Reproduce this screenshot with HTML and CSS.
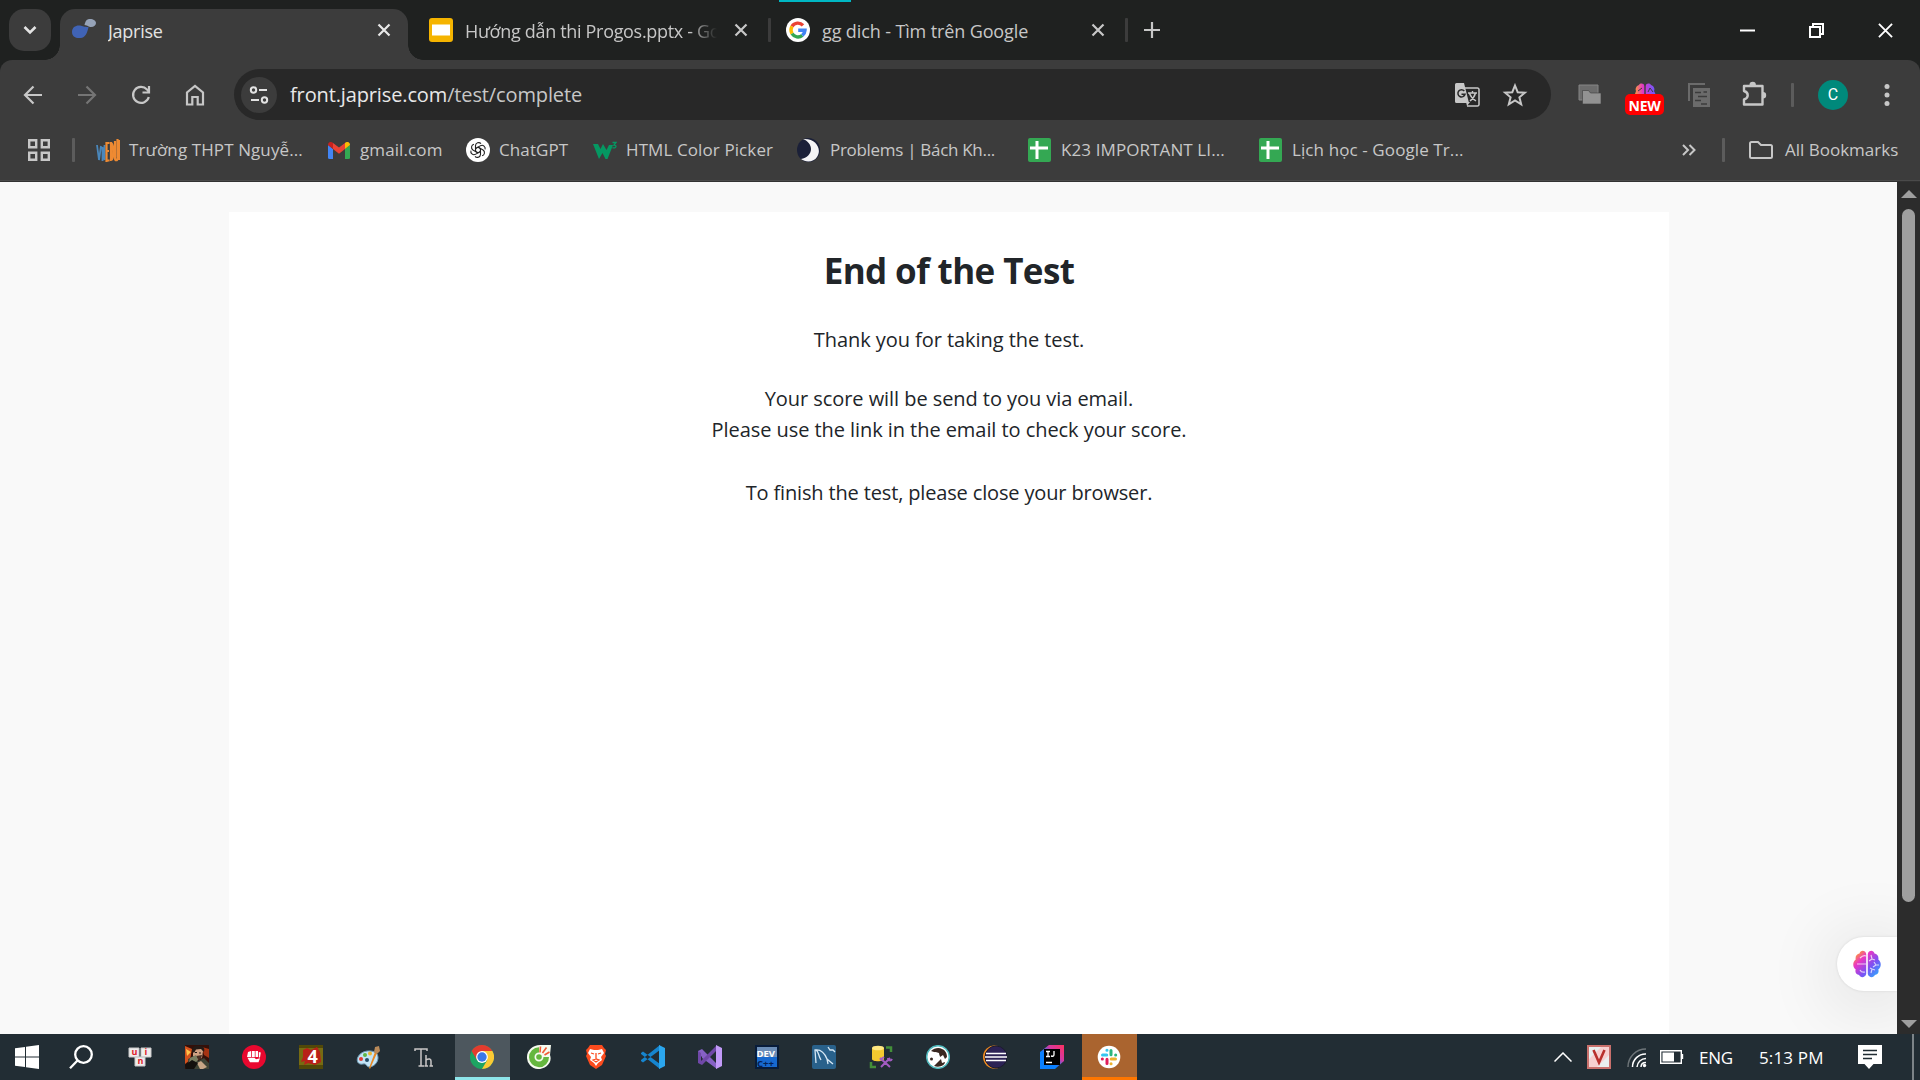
FILE: index.html
```html
<!DOCTYPE html>
<html lang="en">
<head>
<meta charset="utf-8">
<title>Japrise</title>
<link rel="stylesheet" href="styles.css">
</head>
<body>
<div class="screen">
  <header class="tabstrip">
    <button class="tab-search"><svg width="14" height="10" viewBox="0 0 14 10" fill="none" stroke="#e3e3e3" stroke-width="2.6"><path d="M1.5 2l5.5 5.5L12.500 2"/></svg></button>
    <div class="tab tab-active">
      <svg class="favicon" width="24" height="24" viewBox="0 0 24 24"><path d="M0 14c0-5 4-7 8-6.500 3 .5 4 1.500 8.500 1.500-1 5-3 11-8 11C3 20.500 0 18 0 14z" fill="#4063b5"/><path d="M12.500 7c1-4 2-6 5.500-6s6 2 6 4-2 4-5 4c-2.500 0-3-1.500-6.500-2z" fill="#96a3b8"/></svg>
      <span class="tab-title title-1">Japrise</span>
      <svg class="close" width="14" height="14" viewBox="0 0 14 14" stroke="#e8e8e8" stroke-width="2.2"><path d="M1.500 1.500l11 11M12.500 1.500l-11 11"/></svg>
    </div>
    <div class="tab tab-slides">
      <svg class="favicon" width="24" height="24" viewBox="0 0 24 24"><rect width="24" height="24" rx="3" fill="#f5b400"/><rect x="3" y="6.500" width="18" height="11" fill="#fff"/></svg>
      <span class="tab-title title-2">Hướng dẫn thi Progos.pptx - Google Slides</span>
      <svg class="close" width="14" height="14" viewBox="0 0 14 14" stroke="#c7c7c7" stroke-width="2.200"><path d="M1.500 1.500l11 11M12.500 1.500l-11 11"/></svg>
    </div>
    <i class="tab-sep"></i>
    <div class="tab tab-google">
      <svg class="favicon" width="24" height="24" viewBox="0 0 24 24" fill="none" stroke-width="3.400"><circle cx="12" cy="12" r="12" fill="#fff" stroke="none"/><path d="M17 7.300A7 7 0 0 0 6 8.300" stroke="#ea4335"/><path d="M6 8.300a7.500 7.500 0 0 0 0 7.400" stroke="#fbbc05"/><path d="M6 15.700a7 7 0 0 0 10.300 1.700" stroke="#34a853"/><path d="M16.300 17.400A7 7 0 0 0 19 12.300h-6.800" stroke="#4285f4"/></svg>
      <span class="tab-title title-3">gg dich - Tìm trên Google</span>
      <svg class="close" width="14" height="14" viewBox="0 0 14 14" stroke="#c7c7c7" stroke-width="2.200"><path d="M1.500 1.500l11 11M12.500 1.500l-11 11"/></svg>
    </div>
    <i class="tab-sep"></i>
    <svg class="new-tab" width="16" height="16" viewBox="0 0 16 16" stroke="#c7c7c7" stroke-width="2.200"><path d="M8 0v16M0 8h16"/></svg>
    <div class="window-controls">
      <button><svg width="15" height="15" viewBox="0 0 15 15"><path d="M0 6.500h15v2H0z" fill="#fff"/></svg></button>
      <button><svg width="15" height="15" viewBox="0 0 15 15" fill="none" stroke="#fff" stroke-width="2"><path d="M1 4h10v10H1zM4 4V1h10v10h-3"/></svg></button>
      <button><svg width="15" height="15" viewBox="0 0 16 16" stroke="#fff" stroke-width="2"><path d="M1 1l14 14M15 1L1 15"/></svg></button>
    </div>
  </header>

  <div class="chrome">
    <nav class="toolbar">
      <div class="nav-icons">
        <svg width="20" height="20" viewBox="0 0 20 20" fill="none" stroke="#c7c7c7" stroke-width="2.200"><path d="M19 10H2.500M10.500 1.500L2 10l8.500 8.500"/></svg>
        <svg width="20" height="20" viewBox="0 0 20 20" fill="none" stroke="#757575" stroke-width="2.200"><path d="M1 10h16.500M9.500 1.500L18 10l-8.500 8.500"/></svg>
        <svg width="20" height="20" viewBox="0 0 20 20" fill="none" stroke="#c7c7c7" stroke-width="2.200"><path d="M17.800 12a8 8 0 1 1-1.800-7.500l2 2M18 1v6.500h-6.500"/></svg>
        <svg width="20" height="22" viewBox="0 0 20 22" fill="none" stroke="#c7c7c7" stroke-width="2.200"><path d="M2 20.500V8.500l8-6.500 8 6.500v12h-5.300v-7.500H7.300v7.500z"/></svg>
      </div>
      <div class="omnibox">
        <span class="site-info"><svg width="20" height="18" viewBox="0 0 20 18" fill="none" stroke="#e3e3e3" stroke-width="2"><circle cx="4.500" cy="4" r="2.700"/><path d="M10 4h8M2 14h8"/><circle cx="15.500" cy="14" r="2.700"/></svg></span>
        <span class="url">front.japrise.com<span class="path">/test/complete</span></span>
        <svg class="translate" width="26" height="26" viewBox="0 0 26 26"><path d="M11 6h12.500a1.500 1.500 0 0 1 1.500 1.500v15a1.500 1.500 0 0 1-1.500 1.500H13" fill="none" stroke="#c7c7c7" stroke-width="1.500"/><path d="M2.500 1H10l5 20H2.500A1.500 1.500 0 0 1 1 19.500v-17A1.500 1.500 0 0 1 2.500 1zM12 20h4l-3 4z" fill="#c7c7c7"/><path d="M10.300 9A3.600 3.600 0 1 0 11 12.300H7.500" fill="none" stroke="#282828" stroke-width="1.500"/><path d="M14 11h9M18.500 9v2M21.500 11c-1 4-3 6-5.500 8M15.500 11.500c1.500 4 4 6 6.500 7.500" fill="none" stroke="#c7c7c7" stroke-width="1.400"/></svg>
        <svg class="star" width="26" height="24" viewBox="0 0 26 24" fill="none" stroke="#c7c7c7" stroke-width="2"><path d="M13 2.500l2.700 6.700 7.200.5-5.500 4.600 1.800 7-6.200-3.900-6.200 3.900 1.800-7-5.500-4.600 7.200-.5z"/></svg>
      </div>
      <div class="extensions">
        <svg class="ext-tabs" width="24" height="22" viewBox="0 0 24 22"><path d="M1 1h19v15H1z" fill="#6c6c6c" stroke="#858585"/><path d="M4.500 6.500h6l2 2.500h10.500v11H4.500z" fill="#929292" stroke="#3c3c3c" stroke-width=".6"/></svg>
        <span class="ext-brain">
          <svg width="22" height="11" viewBox="0 0 22 11"><defs><linearGradient id="halfBrain"><stop stop-color="#ff963c"/><stop offset=".4" stop-color="#df36cc"/><stop offset="1" stop-color="#645cff"/></linearGradient></defs><path d="M10.300 11V3C10 0 6 0 5 2 2 3 1 6 2 8l-1 3zM11.700 11V3c.5-3 4-3 5.300-1 3 1 4 4 3 6l1.500 3z" fill="url(#halfBrain)"/><path d="M4 8l4-3M14 9l2-4 3 4" stroke="#3c3c3c" fill="none"/></svg>
          <b class="new-badge">NEW</b>
        </span>
        <svg class="ext-news" width="24" height="26" viewBox="0 0 24 26"><path d="M2 19V2h16" fill="none" stroke="#6b6b6b" stroke-width="2"/><path d="M6 6h17v19H6z" fill="#6b6b6b"/><path d="M8 10.500h6M11 14.500h9M8 18.500h6M14 22h6M16.500 10H20" stroke="#3c3c3c" stroke-width="1.500"/></svg>
        <svg class="ext-puzzle" width="26" height="26" viewBox="0 0 26 26"><path d="M3 5h18.500v18.500H3v-5c5-1.500 5-7 0-8.500z" fill="none" stroke="#c7c7c7" stroke-width="2.400" stroke-linejoin="round"/><path d="M8.500 4a3.200 3.200 0 0 1 6.400 0zM22 11a3.200 3.200 0 0 1 0 6.400z" fill="#c7c7c7"/></svg>
        <i class="tool-sep"></i>
        <span class="avatar">C</span>
        <svg class="menu" width="6" height="24" viewBox="0 0 6 24" fill="#c7c7c7"><circle cx="3" cy="3.500" r="2.500"/><circle cx="3" cy="12" r="2.500"/><circle cx="3" cy="20.500" r="2.500"/></svg>
      </div>
    </nav>

    <nav class="bookmarks">
      <svg class="apps" width="22" height="22" viewBox="0 0 22 22" fill="none" stroke="#c7c7c7" stroke-width="2.400"><path d="M1.200 1.200h7v7h-7zM13.800 1.200h7v7h-7zM1.200 13.800h7v7h-7zM13.800 13.800h7v7h-7z"/></svg>
      <i class="bm-sep"></i>
      <a class="bm bm-school"><svg width="24" height="24" viewBox="0 0 24 24" fill="none"><path d="M1 7l2 15 2-14M6.500 23V9l2 13V7" stroke="#4a87bb" stroke-width="1.800"/><path d="M10.500 4v20M10 5h3.500M10 13h3M10 22.500h3.500M15 4v18c3 0 3-17 0-17M19 3v17c0 3 2.500 3 2.500 0V1M23.300 2v20" stroke="#ee8a32" stroke-width="2.200"/></svg><span>Trường THPT Nguyễ...</span></a>
      <a class="bm bm-gmail"><svg width="22" height="17" viewBox="0 0 22 17"><path d="M0 3l5 4v10H1.500A1.500 1.500 0 0 1 0 15.500z" fill="#4285f4"/><path d="M22 3l-5 4v10h3.500a1.500 1.500 0 0 0 1.500-1.500z" fill="#34a853"/><path d="M0 3c0-3 3-4 5-2v6L0 3z" fill="#c5221f"/><path d="M22 3c0-3-3-4-5-2v6l5-4z" fill="#fbbc04"/><path d="M5 1l6 4.500L17 1v6l-6 4.700L5 7z" fill="#ea4335"/></svg><span>gmail.com</span></a>
      <a class="bm bm-gpt"><svg width="24" height="24" viewBox="0 0 24 24" fill="none" stroke="#222" stroke-width="1.100"><circle cx="12" cy="12" r="12" fill="#fff" stroke="none"/><g id="petals"><path d="M12 9.200l2.500 1.400v5.800a3.200 3.200 0 0 1-5.500 2"/><path d="M12 9.200l2.500 1.400v5.800a3.200 3.200 0 0 1-5.500 2" transform="rotate(60 12 12)"/><path d="M12 9.200l2.500 1.400v5.800a3.200 3.200 0 0 1-5.500 2" transform="rotate(120 12 12)"/></g><use href="#petals" transform="rotate(180 12 12)"/></svg><span>ChatGPT</span></a>
      <a class="bm bm-w3"><svg width="24" height="18" viewBox="0 0 24 18"><path d="M0 3h5l2.500 5L10 3l3.500 6L16 4h4l-5.500 14h-2L9.500 12 6 18z" fill="#059862"/><path d="M19.500 1.500H23l-2 2.500c3 0 2.500 4-1.500 2.700" fill="none" stroke="#059862" stroke-width="1.300"/></svg><span>HTML Color Picker</span></a>
      <a class="bm bm-problems"><svg width="23" height="24" viewBox="0 0 23 24"><ellipse cx="11.500" cy="12" rx="11.500" ry="12" fill="#1b2038"/><path d="M6 1c14-1 19 11 14 18-3 5-11 6-16 2 6-1 10-5 10-10 0-4-3-8-8-10z" fill="#f4f4f6"/></svg><span>Problems | Bách Kh...</span></a>
      <a class="bm bm-k23"><svg width="23" height="24" viewBox="0 0 23 24"><rect width="23" height="24" rx="2" fill="#34a853"/><path d="M2 10h18M9 3v18" stroke="#fff" stroke-width="3"/></svg><span>K23 IMPORTANT LI...</span></a>
      <a class="bm bm-schedule"><svg width="23" height="24" viewBox="0 0 23 24"><rect width="23" height="24" rx="2" fill="#34a853"/><path d="M2 10h18M9 3v18" stroke="#fff" stroke-width="3"/></svg><span>Lịch học - Google Tr...</span></a>
      <svg class="more" width="14" height="12" viewBox="0 0 14 12" fill="none" stroke="#c7c7c7" stroke-width="2"><path d="M1 1l5 5-5 5M7.500 1l5 5-5 5"/></svg>
      <i class="bm-sep"></i>
      <a class="bm bm-all"><svg width="24" height="18" viewBox="0 0 24 18" fill="none" stroke="#c7c7c7" stroke-width="2"><path d="M2.500 1H9l3 3h9.500A1.500 1.500 0 0 1 23 5.500v10a1.500 1.500 0 0 1-1.500 1.500h-19A1.500 1.500 0 0 1 1 15.500v-13A1.500 1.500 0 0 1 2.500 1z"/></svg><span>All Bookmarks</span></a>
    </nav>
  </div>

  <div class="viewport">
    <main class="page">
      <section class="card">
        <h1>End of the Test</h1>
        <p>Thank you for taking the test.</p>
        <p>Your score will be send to you via email.<br>Please use the link in the email to check your score.</p>
        <p class="last">To finish the test, please close your browser.</p>
      </section>
      <div class="assistant"><svg width="28" height="28" viewBox="0 0 28 28"><defs><linearGradient id="brain" x1="0" y1="0" x2="1" y2="1"><stop offset=".1" stop-color="#ff9a35"/><stop offset=".32" stop-color="#e936c5"/><stop offset=".62" stop-color="#7a52f4"/><stop offset="1" stop-color="#1cc0ff"/></linearGradient></defs><path d="M13.200 4v20c-1 4-6 4-7 1-3 0-4.500-3-3.500-5.500-3.500-2.500-3-8 0-10C2 6 4 4 6.500 3.500c1-4 6-3.500 6.700.5zM14.800 4v20c1 4 6 4 7 1 3 0 4.500-3 3.500-5.500 3.500-2.500 3-8 0-10C26 6 24 4 21.500 3.500c-1-4-6-3.500-6.700.5z" fill="url(#brain)"/><path d="M13 6c-2-1-4 0-6 2M4 14h9M7 20c1 2 3 2.500 5 2M18 5l1 4-3 2M19 9l3 1M21 12l2 3h3M23 15l-3 2M18 23l1-4-2-1M19 19l3 1" fill="none" stroke="#ffffffb8" stroke-width="1.200"/></svg></div>
    </main>
    <aside class="scrollbar">
      <svg width="16" height="8" viewBox="0 0 16 8"><path d="M0 8l8-8 8 8z" fill="#9f9f9f"/></svg>
      <i class="thumb"></i>
      <svg width="16" height="8" viewBox="0 0 16 8"><path d="M0 0l8 8 8-8z" fill="#9f9f9f"/></svg>
    </aside>
  </div>

  <footer class="taskbar">
    <span class="start"><svg width="24" height="24" viewBox="0 0 24 24" fill="#fff"><path d="M0 3.300l10-1.400v9.600H0zM11 1.700L24 0v11.500H11zM0 12.500h10v9.600L0 20.700zM11 12.500h13V24l-13-1.700z"/></svg></span>
    <span class="search"><svg width="24" height="24" viewBox="0 0 24 24" fill="none" stroke="#fff" stroke-width="2.300"><circle cx="14.500" cy="9.500" r="8.300"/><path d="M8.500 15.500L1 23.200"/></svg></span>
    <div class="apps-row">
      <span><svg width="24" height="24" viewBox="0 0 24 24" class="keys"><path d="M1 3h10v9H1zM13 3h10v9H13zM7 12h10v9H7z" fill="#efeded" stroke="#c9c9c9"/><text x="3.500" y="9.500">u</text><text x="16.500" y="10">i</text><text x="9.500" y="18.500">n</text></svg></span>
      <span><svg width="24" height="24" viewBox="0 0 24 24"><path d="M0 0h24v24H0z" fill="#341009"/><path d="M0 1l7 3-2 11-5 4z" fill="#d4521d"/><path d="M1 4l5 3-4 4z" fill="#ffc34a"/><path d="M17 2l7 2v9l-5-3z" fill="#a63312"/><path d="M8 5c2-4 9-3 10 1l-1 7-5 2-4-4z" fill="#d0a081"/><path d="M7 6c0-5 4-6 8-5 4 0 5 3 4 6l-3-3-5 .5L9 8z" fill="#241a16"/><path d="M10 7.500h2M14 8h2" stroke="#241a16"/><path d="M11 11l6-1-1 4-3 1z" fill="#4a2f23"/><path d="M3 14l6-3 4 5 6-3 5 5v6H4z" fill="#3f4436"/><path d="M5 13l6-3 2 5-4 4-5-2z" fill="#7b7f62"/><path d="M12 18l4-2 6 6-4 2h-3z" fill="#c7a686"/><path d="M0 20l7-5 6 3-4 6H1z" fill="#14110e"/></svg></span>
      <span><svg width="24" height="24" viewBox="0 0 24 24"><circle cx="12" cy="12" r="12" fill="#e9082f"/><path d="M6 7l3-1v6l-4 0zM9.800 6h3v6h-3zM13.500 6h2.500v6h-2.500zM16.800 7l2 .5-.8 5h-1.200zM5.500 12.800h7l1.500 1.500 4-1-1.500 4H8z" fill="#fff"/></svg></span>
      <span><svg width="24" height="24" viewBox="0 0 24 24" class="four"><path d="M0 0h24v24H0z" fill="#776b12"/><path d="M0 0h24v3H0zM0 20h24v4H0z" fill="#514808"/><path d="M4 5l4-2 4 2 6-3 3 5 1 10-6 3-7-2-4 2 1-4-4 1 2-5z" fill="#b82018"/><text x="8.500" y="18">4</text></svg></span>
      <span><svg width="25" height="24" viewBox="0 0 25 24"><path d="M2 12C5 5 17 4 21 9c3 5-1 12-7 13-4 .5-3-4-7-3-5 1-7-3-5-7z" fill="#c3e4f6" stroke="#729eb9"/><circle cx="5" cy="14" r="2" fill="#e33b32"/><circle cx="9" cy="10" r="2" fill="#5eb544"/><circle cx="14" cy="8.500" r="2" fill="#edb431"/><circle cx="11" cy="15" r="2" fill="#244c66"/><path d="M13 23L19 7l2 1-7 16z" fill="#e88924"/><path d="M18 7l1-5 4-1 1 5-3 3z" fill="#b88959"/></svg></span>
      <span><svg width="24" height="24" viewBox="0 0 24 24" fill="none" stroke="#c9c6c6" stroke-width="1.500"><path d="M2 6V4h12v2M8 4v16.500M5.500 21H11M13 10v11M13 15c3-2 5-1 5 1v5M11.500 21H15M16.500 21H20"/></svg></span>
      <span class="running"><svg width="24" height="24" viewBox="0 0 24 24"><circle cx="12" cy="12" r="12" fill="#1da462"/><path d="M1.600 6A12 12 0 0 1 22.400 6H12z" fill="#e33b2e"/><path d="M1.600 6l5.300 9L12 12V6z" fill="#e33b2e"/><path d="M22.400 6A12 12 0 0 1 12 24l5.300-9L12 6z" fill="#fcc934"/><circle cx="12" cy="12" r="5.900" fill="#fff"/><circle cx="12" cy="12" r="4.700" fill="#3b78e7"/></svg></span>
      <span><svg width="24" height="24" viewBox="0 0 24 24"><path d="M13 0h11l-1 10c3 8-5 14-12 14A11.500 11.500 0 0 1 0 12C0 5 6 0 13 0z" fill="#f6fbef"/><path d="M12 2.200A10 10 0 1 0 22 12h-5.500a4.500 4.500 0 1 1-4.500-4.500z" fill="#65b73e"/><circle cx="12" cy="12" r="2.800" fill="#65b73e"/><path d="M13 7.500l.5-6M15.500 8l4-5.500M17.500 10l5-3" stroke="#f15b35" stroke-width="1.600"/></svg></span>
      <span><svg width="24" height="24" viewBox="0 0 24 24"><path d="M6 0h12l2 3 2 2-1 4 1 2-4 9-6 4-6-4-4-9 1-2-1-4 2-2z" fill="#fb4b1e"/><path d="M6 4l4 1h4l4-1 2 4-3 4 1 3-4 3-2 3-2-3-4-3 1-3-3-4z" fill="#fff"/><path d="M7 8l3 1M17 8l-3 1M12 8v6M9 15l3-1 3 1-3 2z" fill="none" stroke="#fb4b1e" stroke-width="1.300"/></svg></span>
      <span><svg width="24" height="24" viewBox="0 0 24 24"><path d="M0 8l2-1.500L19 19v5L0 9zM0 16l2 1.500L19 5V0L0 15z" fill="#1685cf"/><path d="M18 0l6 3v18l-6 3z" fill="#2ba6ee"/></svg></span>
      <span><svg width="24" height="24" viewBox="0 0 24 24"><path d="M0 6l4-2 15 15v5L4 13v-2L0 15z" fill="#8661c5"/><path d="M0 18V6l3 2v8L19 0v5L4 20z" fill="#7048a8"/><path d="M18 0l6 3v18l-6 3z" fill="#c29af8"/></svg></span>
      <span><svg width="24" height="24" viewBox="0 0 24 24" class="dev"><path d="M1 1h22v22H1z" fill="#1769cf" stroke="#081c3a" stroke-width="2"/><path d="M2 2h20v10H2z" fill="#6b8db7"/><text x="1.500" y="11.500" fill="#fff">DEV</text><text x="2" y="21.500" fill="#052053">C++</text></svg></span>
      <span><svg width="24" height="24" viewBox="0 0 24 24"><rect width="24" height="24" rx="2" fill="#29618b"/><path d="M4 18L3 5c6-1 10 4 12 9l6 5M4 5c3 2 2 5 5 10M15 14l1 5M16 2l2 3h3l2 2" fill="none" stroke="#d7e8f5" stroke-width="1.300"/></svg></span>
      <span><svg width="24" height="24" viewBox="0 0 24 24"><path d="M3 3v11c0 3 12 3 12 0V3z" fill="#f4c92f"/><ellipse cx="9" cy="3" rx="6" ry="2.300" fill="#ffe781"/><path d="M17 2.500h5V7M2 17v5h5" fill="none" stroke="#438f39" stroke-width="2.500"/><path d="M11 13l10 9M21 13l-9 9M11 15l4-3M19 13c0 3 3 3 4 1" fill="none" stroke="#a35bc2" stroke-width="2"/></svg></span>
      <span><svg width="24" height="24" viewBox="0 0 24 24"><circle cx="12" cy="12" r="11.300" fill="#fff" stroke="#4fb9bd" stroke-width="1.500"/><path d="M5 6c3-3 8-4 11-2 3 1 5 4 5 8l-2 2-2-4-3 2-2-4-4-1z" fill="#382720"/><path d="M9 7l4 1 1 5-3 3-6 1-1-3 2-4z" fill="#fff"/><path d="M8 21l3-3 4-4 1 4 3-1c0 3-5 6-11 4z" fill="#382720"/><circle cx="5.500" cy="14" r="1.500" fill="#382720"/></svg></span>
      <span><svg width="24" height="24" viewBox="0 0 24 24"><circle cx="11.500" cy="12" r="11.500" fill="#f18b20"/><circle cx="13" cy="12" r="11" fill="#2c2255" stroke="#1b1a2f"/><path d="M3 8.500h20M2 12h22M3 15.500h20" stroke="#fff" stroke-width="1.700"/></svg></span>
      <span><svg width="24" height="24" viewBox="0 0 24 24"><defs><linearGradient id="idea" x1="1" y1="0" x2="0" y2="1"><stop stop-color="#ff315e"/><stop offset=".35" stop-color="#d438a2"/><stop offset=".6" stop-color="#0a80ff"/></linearGradient></defs><path d="M9 0h15v16l-9 8H0V7z" fill="url(#idea)"/><path d="M4 4h16v16H4z"/><path d="M6 6.500h4M8 6.500v5M6 11.500h4M14 6v3.500c0 2-1 2-3 1.500M6 17.500h6" fill="none" stroke="#fff" stroke-width="1.300"/></svg></span>
      <span class="alert"><svg width="24" height="24" viewBox="0 0 24 24" stroke-width="3" stroke-linecap="round"><circle cx="12" cy="12" r="11.300" fill="#fff"/><path d="M5.500 10h4.300M10 5.300h-.1" stroke="#36c5f0"/><path d="M14 5.500v4.300M18.700 10h-.1" stroke="#2eb67d"/><path d="M14.200 14h4.300M14 18.700h.1" stroke="#ecb22e"/><path d="M10 14.200v4.300M5.300 14h.1" stroke="#e01e5a"/></svg></span>
    </div>
    <div class="tray">
      <svg class="chevron" width="18" height="10" viewBox="0 0 18 10" fill="none" stroke="#fff" stroke-width="1.500"><path d="M.5 9.500L9 1l8.500 8.500"/></svg>
      <svg class="vkey" width="24" height="24" viewBox="0 0 24 24"><path d="M1 1h22v22H1z" fill="#f7d0d0" stroke="#c9706c" stroke-width="2"/><path d="M2 2h12L2 14zM22 10v12H10z" fill="#e9eeee"/><path d="M6.500 5l5.500 12.500L17.500 5" fill="none" stroke="#b8302c" stroke-width="2.600"/></svg>
      <svg class="wifi" width="20" height="20" viewBox="0 0 20 20" fill="none" stroke-width="1.500"><path d="M1 19A18 18 0 0 1 19 1" stroke="#6d7478"/><path d="M5.500 19A13 13 0 0 1 19 6M10 19a9 9 0 0 1 9-8.500M14 19c0-3 2-4.500 5-4.500" stroke="#fff"/><circle cx="17.500" cy="17.500" r="1.700" fill="#fff"/></svg>
      <svg class="battery" width="24" height="14" viewBox="0 0 24 14"><path d="M.7.700h20.600v12.600H.700zM22.500 4v5" fill="none" stroke="#fff" stroke-width="1.400"/><path d="M2.500 2.500H14v9H2.500z" fill="#fff"/></svg>
      <span class="lang">ENG</span>
      <span class="clock">5:13 PM</span>
      <svg class="notice" width="24" height="24" viewBox="0 0 24 24"><path d="M0 0h24v19H15.500L11 24l-4.500-5H0z" fill="#fff"/><path d="M5 5.500h14M5 9.500h14M5 13.500h9" stroke="#202c33" stroke-width="1.300"/></svg>
      <i class="show-desktop"></i>
    </div>
  </footer>
</div>
</body>
</html>
```
FILE: styles.css
```css
* { box-sizing: border-box; }
body { margin: 0; background: #1f2120; font-family: "Open Sans", "Noto Sans", sans-serif; overflow: hidden; }
svg { display: block; flex: none; }
button { border: 0; padding: 0; background: none; display: flex; align-items: center; justify-content: center; }
.screen { width: 1920px; height: 1080px; display: flex; flex-direction: column; }

/* Tab strip */
.tabstrip { height: 60px; display: flex; align-items: center; padding-left: 9px; flex: none; color: #c7c7c7; }
.tab-search { width: 42px; height: 42px; border-radius: 15px; background: #3c3c3c; margin-right: 9px; }
.tab { display: flex; align-items: center; height: 60px; position: relative; }
.tab-title { font-size: 18px; line-height: 24px; margin-top: 2px; white-space: nowrap; overflow: hidden; }
.tab .close { margin-left: auto; }
.tab-active { width: 348px; height: 51px; align-self: flex-end; background: #3c3c3c; border-radius: 15px 15px 0 0; padding: 0 17px 9px 12px; color: #e3e3e3; }
.tab-active::before, .tab-active::after { content: ""; position: absolute; bottom: 0; width: 15px; height: 15px; }
.tab-active::before { left: -15px; background: radial-gradient(circle at 0 0, transparent 14.500px, #3c3c3c 15px); }
.tab-active::after { right: -15px; background: radial-gradient(circle at 100% 0, transparent 14.500px, #3c3c3c 15px); }
.title-1 { margin-left: 12px; letter-spacing: -.25px; }
.tab-slides { width: 360px; padding: 0 20px 0 21px; }
.title-2 { width: 252px; margin-left: 12px; letter-spacing: -.32px; -webkit-mask-image: linear-gradient(90deg, #000 225px, transparent 252px); mask-image: linear-gradient(90deg, #000 225px, transparent 252px); }
.tab-google { width: 354px; padding: 0 20px 0 15px; }
.tab-google::before { content: ""; position: absolute; left: 8px; top: 0; width: 72px; height: 2px; background: #00b7c3; }
.title-3 { margin-left: 12px; letter-spacing: -.12px; }
.tab-sep { width: 3px; height: 24px; border-radius: 1px; background: #3c3c3c; }
.new-tab { margin-left: 16px; }
.window-controls { margin-left: auto; display: flex; }
.window-controls button { width: 69px; height: 60px; }

/* Toolbar */
.chrome { height: 122px; flex: none; background: #3c3c3c; border-radius: 12px 12px 0 0; border-bottom: 1px solid #323232; box-shadow: inset 0 -1px #4a4a4a; }
.toolbar { height: 69px; display: flex; align-items: center; }
.nav-icons { display: flex; gap: 34px; padding-left: 23px; width: 234px; align-items: center; }
.omnibox { width: 1317px; height: 51px; border-radius: 26px; background: #282828; display: flex; align-items: center; padding: 0 23px 0 7px; }
.site-info { width: 36px; height: 36px; border-radius: 50%; background: #3c3c3c; display: flex; align-items: center; justify-content: center; }
.url { margin-left: 13px; font-size: 20px; letter-spacing: -.13px; color: #e8e8e8; }
.path { color: #c7c7c7; }
.translate { margin-left: auto; margin-right: 22px; }
.extensions { display: flex; align-items: center; flex: 1; padding-left: 27px; }
.ext-brain { width: 39px; margin-left: 23px; display: flex; flex-direction: column; align-items: center; padding-top: 9px; }
.new-badge { width: 39px; height: 21px; border-radius: 5px; background: #f00; color: #fff; font-size: 14px; line-height: 23px; text-align: center; letter-spacing: -.3px; }
.ext-news { margin-left: 23px; }
.ext-puzzle { margin: -2px 0 0 30px; }
.tool-sep { width: 3px; height: 24px; border-radius: 1px; background: #5c5c5c; margin-left: 24px; }
.avatar { margin-left: 24px; width: 30px; height: 30px; border-radius: 50%; background: #00897b; color: #fff; font: 16px/30px Roboto, sans-serif; text-align: center; }
.menu { margin-left: 36px; }

/* Bookmarks bar */
.bookmarks { height: 42px; display: flex; align-items: center; padding-left: 28px; color: #c7c7c7; }
.bm-sep { width: 3px; height: 24px; border-radius: 1px; background: #5c5c5c; }
.apps { margin-right: 22px; }
.bm { display: flex; align-items: center; white-space: nowrap; font-size: 17px; line-height: 24px; letter-spacing: .1px; }
.bm-school { margin-left: 21px; width: 232px; gap: 9px; }
.bm-gmail { width: 138px; gap: 10px; }
.bm-gpt { width: 127px; gap: 9px; }
.bm-w3 { width: 204px; gap: 9px; }
.bm-problems { width: 231px; gap: 10px; letter-spacing: -.3px; }
.bm-k23 { width: 231px; gap: 10px; }
.bm-schedule { width: 423px; gap: 10px; }
.more { margin-right: 26px; }
.bm-all { margin-left: 24px; gap: 12px; letter-spacing: 0; }

/* Page */
.viewport { height: 852px; display: flex; flex: none; }
.page { width: 1897px; background: #f9f9f9; padding: 30px 228px 0 229px; position: relative; overflow: hidden; }
.card { height: 822px; background: #fff; padding-top: 37px; text-align: center; color: #212529; }
.card h1 { margin: 0 0 32px; font-size: 35px; line-height: 43px; font-weight: 700; letter-spacing: -.6px; }
.card p { margin: 0 0 27px; font-size: 20px; line-height: 31.5px; letter-spacing: -.06px; }
.card p + p { margin-bottom: 31.5px; }
.card .last { letter-spacing: -.15px; }
.assistant { position: absolute; right: 0; top: 755px; width: 60px; height: 54px; border-radius: 27px 0 0 27px; background: #fff; padding: 13px 0 0 16px; box-shadow: 0 8px 70px 8px #0000001c, 0 0 3px #0000001c; }
.scrollbar { width: 23px; background: #2c2c2c; display: flex; flex-direction: column; align-items: center; padding: 8px 0 6px; justify-content: space-between; }
.thumb { width: 13px; height: 693px; border-radius: 7px; background: #9f9f9f; margin: 11px 0 auto; }

/* Taskbar */
.taskbar { height: 46px; background: #222d34; display: flex; color: #fff; }
.start, .search, .apps-row span { display: flex; align-items: center; justify-content: center; }
.start { width: 54px; }
.search { width: 54px; }
.apps-row { display: flex; gap: 2px; padding-left: 5px; }
.apps-row span { width: 55px; padding-right: 1px; }
.apps-row .running { background: #4d575e; box-shadow: inset 0 -3px #8ee5ea; }
.apps-row .alert { background: #aa642f; box-shadow: inset 0 -3px #ff7600; }
.keys text { font: bold 9px "Open Sans", sans-serif; fill: #e0232a; }
.dev text { font: bold 9.500px "Open Sans", sans-serif; }
.four text { font: bold 18px "Open Sans", sans-serif; fill: #fff; }
.tray { flex: 1; display: flex; align-items: center; padding-left: 417px; font-size: 17px; }
.vkey { margin-left: 15px; }
.wifi { margin-left: 16px; margin-top: 2px; }
.battery { margin-left: 13px; }
.lang { margin-left: 15px; width: 36px; letter-spacing: -.2px; }
.clock { margin-left: 24px; width: 68px; letter-spacing: .15px; white-space: nowrap; }
.notice { margin-left: 31px; }
.show-desktop { margin-left: auto; margin-right: 6px; width: 2px; height: 46px; background: #7d8488; }
```
